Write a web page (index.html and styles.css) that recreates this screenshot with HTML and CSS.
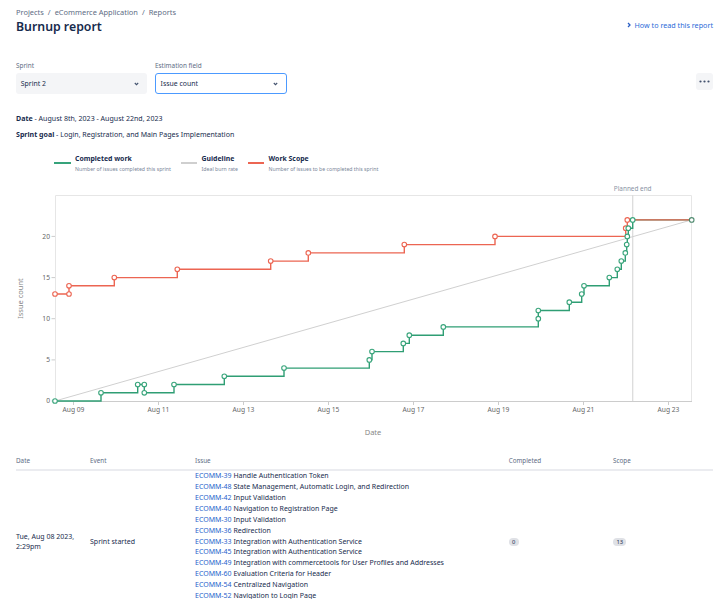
FILE: index.html
```html
<!DOCTYPE html>
<html lang="en">
<head>
<meta charset="utf-8">
<title>Burnup report</title>
<link rel="stylesheet" href="styles.css">
</head>
<body>
<header class="top">
  <div class="titles">
    <nav class="crumbs"><span>Projects</span><span class="sep">/</span><span>eCommerce Application</span><span class="sep">/</span><span>Reports</span></nav>
    <h1 class="title">Burnup report</h1>
  </div>
  <a class="howto"><svg class="howto-icon" width="4" height="6" viewBox="0 0 4 6"><path d="M1 1 L3 3 L1 5" fill="none" stroke="#2a5fc4" stroke-width="1.3"/></svg><span>How to read this report</span></a>
</header>

<section class="filters">
  <div class="field">
    <span class="flabel">Sprint</span>
    <div class="select">Sprint 2<svg class="chev" width="5" height="4" viewBox="0 0 5 4"><path d="M0.8 1 L2.5 2.7 L4.2 1" fill="none" stroke="#42526e" stroke-width="1.1"/></svg></div>
  </div>
  <div class="field">
    <span class="flabel">Estimation field</span>
    <div class="select select-active">Issue count<svg class="chev" width="5" height="4" viewBox="0 0 5 4"><path d="M0.8 1 L2.5 2.7 L4.2 1" fill="none" stroke="#42526e" stroke-width="1.1"/></svg></div>
  </div>
  <button class="more" type="button" aria-label="More"><svg width="11" height="3" viewBox="0 0 11 3"><circle cx="1.5" cy="1.5" r="1.1" fill="#42526e"/><circle cx="5.5" cy="1.5" r="1.1" fill="#42526e"/><circle cx="9.5" cy="1.5" r="1.1" fill="#42526e"/></svg></button>
</section>

<section class="meta">
  <p><b>Date</b> - August 8th, 2023 - August 22nd, 2023</p>
  <p class="goal"><b>Sprint goal</b> - Login, Registration, and Main Pages Implementation</p>
</section>

<div class="legend">
  <div class="litem"><span class="swatch sw-green"></span><div><span class="ltitle">Completed work</span><span class="lsub">Number of issues completed this sprint</span></div></div>
  <div class="litem"><span class="swatch sw-gray"></span><div><span class="ltitle">Guideline</span><span class="lsub">Ideal burn rate</span></div></div>
  <div class="litem"><span class="swatch sw-red"></span><div><span class="ltitle">Work Scope</span><span class="lsub">Number of issues to be completed this sprint</span></div></div>
</div>

<svg class="chart" width="726" height="264" viewBox="0 176 726 264">
  <path class="frame" d="M55.5,400 V194.5 H691.5 V400"/>
  <line class="plannedend" x1="632.7" y1="194" x2="632.7" y2="400"/>
  <text class="pe-label" x="632.7" y="190">Planned end</text>
  <line class="guide" x1="55" y1="400" x2="691.7" y2="218.9"/>
  <line class="axis" x1="55" y1="400.5" x2="692" y2="400.5"/>
  <g class="xticks">
    <line x1="73.5" y1="400" x2="73.5" y2="404"/>
    <line x1="158.5" y1="400" x2="158.5" y2="404"/>
    <line x1="243.5" y1="400" x2="243.5" y2="404"/>
    <line x1="328.5" y1="400" x2="328.5" y2="404"/>
    <line x1="413.5" y1="400" x2="413.5" y2="404"/>
    <line x1="498.5" y1="400" x2="498.5" y2="404"/>
    <line x1="583.5" y1="400" x2="583.5" y2="404"/>
    <line x1="668.5" y1="400" x2="668.5" y2="404"/>
  </g>
  <g class="xlabels">
    <text x="73.5" y="410.5">Aug 09</text>
    <text x="158.5" y="410.5">Aug 11</text>
    <text x="243.5" y="410.5">Aug 13</text>
    <text x="328.5" y="410.5">Aug 15</text>
    <text x="413.5" y="410.5">Aug 17</text>
    <text x="498.5" y="410.5">Aug 19</text>
    <text x="583.5" y="410.5">Aug 21</text>
    <text x="668.5" y="410.5">Aug 23</text>
  </g>
  <g class="yticks">
    <line x1="51.5" y1="400" x2="55" y2="400"/>
    <line x1="51.5" y1="358.9" x2="55" y2="358.9"/>
    <line x1="51.5" y1="317.7" x2="55" y2="317.7"/>
    <line x1="51.5" y1="276.6" x2="55" y2="276.6"/>
    <line x1="51.5" y1="235.4" x2="55" y2="235.4"/>
  </g>
  <g class="ylabels">
    <text x="50" y="402.3">0</text>
    <text x="50" y="361.2">5</text>
    <text x="50" y="320">10</text>
    <text x="50" y="278.9">15</text>
    <text x="50" y="237.7">20</text>
  </g>
  <text class="axis-title" x="373" y="433.5">Date</text>
  <text class="axis-title" transform="translate(23.2 297.5) rotate(-90)" x="0" y="0">Issue count</text>

  <path class="line-green" d="M55,400 H101 V391.8 H137.7 V383.5 H144.3 V391.8 H174 V383.5 H224.3 V375.3 H284 V367.1 H369.3 V358.9 H372 V350.6 H403.3 V342.4 H409.3 V334.2 H443.3 V325.9 H538.3 V309.5 H569.3 V301.2 H581.7 V293 H584 V284.8 H609.3 V276.6 H617.3 V268.3 H621.3 V260.1 H625.3 V251.9 H626.7 V243.6 H627.3 V235.4 H628.3 V227.2 H632.7 V218.9 H691.7"/>
  <path class="line-red" d="M55,293 H69 V284.8 H114.3 V276.6 H177.3 V268.3 H270.7 V260.1 H308.3 V251.9 H404.3 V243.6 H495 V235.4 H625.7 V227.2 H627.3 V218.9 H691.7"/>

  <g class="dots-red">
    <circle cx="55" cy="293" r="2.3"/>
    <circle cx="69" cy="293" r="2.3"/>
    <circle cx="69" cy="284.8" r="2.3"/>
    <circle cx="114.3" cy="276.6" r="2.3"/>
    <circle cx="177.3" cy="268.3" r="2.3"/>
    <circle cx="270.7" cy="260.1" r="2.3"/>
    <circle cx="308.3" cy="251.9" r="2.3"/>
    <circle cx="404.3" cy="243.6" r="2.3"/>
    <circle cx="495" cy="235.4" r="2.3"/>
    <circle cx="625.7" cy="227.2" r="2.3"/>
    <circle cx="627.3" cy="218.9" r="2.3"/>
  </g>
  <g class="dots-green">
    <circle cx="55" cy="400" r="2.3"/>
    <circle cx="101" cy="391.8" r="2.3"/>
    <circle cx="137.7" cy="383.5" r="2.3"/>
    <circle cx="144.3" cy="383.5" r="2.3"/>
    <circle cx="144.3" cy="391.8" r="2.3"/>
    <circle cx="174" cy="383.5" r="2.3"/>
    <circle cx="224.3" cy="375.3" r="2.3"/>
    <circle cx="284" cy="367.1" r="2.3"/>
    <circle cx="369.3" cy="358.9" r="2.3"/>
    <circle cx="372" cy="350.6" r="2.3"/>
    <circle cx="403.3" cy="342.4" r="2.3"/>
    <circle cx="409.3" cy="334.2" r="2.3"/>
    <circle cx="443.3" cy="325.9" r="2.3"/>
    <circle cx="538.3" cy="317.7" r="2.3"/>
    <circle cx="538.3" cy="309.5" r="2.3"/>
    <circle cx="569.3" cy="301.2" r="2.3"/>
    <circle cx="581.7" cy="293" r="2.3"/>
    <circle cx="584" cy="284.8" r="2.3"/>
    <circle cx="609.3" cy="276.6" r="2.3"/>
    <circle cx="617.3" cy="268.3" r="2.3"/>
    <circle cx="621.3" cy="260.1" r="2.3"/>
    <circle cx="625.3" cy="251.9" r="2.3"/>
    <circle cx="626.7" cy="243.6" r="2.3"/>
    <circle cx="627.3" cy="235.4" r="2.3"/>
    <circle cx="628.3" cy="227.2" r="2.3"/>
    <circle cx="632.7" cy="218.9" r="2.3"/>
    <circle class="end-dot" cx="691.7" cy="218.9" r="2.3"/>
  </g>
</svg>

<section class="table">
  <div class="th">Date</div>
  <div class="th">Event</div>
  <div class="th">Issue</div>
  <div class="th">Completed</div>
  <div class="th">Scope</div>

  <div class="td td-date">Tue, Aug 08 2023,<br>2:29pm</div>
  <div class="td">Sprint started</div>
  <div class="td td-issues">
    <div class="issue"><a class="key">ECOMM-39</a> Handle Authentication Token</div>
    <div class="issue"><a class="key">ECOMM-48</a> State Management, Automatic Login, and Redirection</div>
    <div class="issue"><a class="key">ECOMM-42</a> Input Validation</div>
    <div class="issue"><a class="key">ECOMM-40</a> Navigation to Registration Page</div>
    <div class="issue"><a class="key">ECOMM-30</a> Input Validation</div>
    <div class="issue"><a class="key">ECOMM-36</a> Redirection</div>
    <div class="issue"><a class="key">ECOMM-33</a> Integration with Authentication Service</div>
    <div class="issue"><a class="key">ECOMM-45</a> Integration with Authentication Service</div>
    <div class="issue"><a class="key">ECOMM-49</a> Integration with commercetools for User Profiles and Addresses</div>
    <div class="issue"><a class="key">ECOMM-60</a> Evaluation Criteria for Header</div>
    <div class="issue"><a class="key">ECOMM-54</a> Centralized Navigation</div>
    <div class="issue"><a class="key">ECOMM-52</a> Navigation to Login Page</div>
    <div class="issue"><a class="key">ECOMM-51</a> Navigation to Main Page</div>
  </div>
  <div class="td"><span class="badge">0</span></div>
  <div class="td"><span class="badge">13</span></div>
</section>
</body>
</html>
```

FILE: styles.css
```css
html, body {
  overflow: hidden;
}
body {
  margin: 0;
  background: #ffffff;
  color: #172b4d;
  font-family: "Noto Sans", "Open Sans", sans-serif;
}

/* header */
.top {
  display: flex;
  justify-content: space-between;
  align-items: flex-start;
  padding: 6px 13px 0 16px;
}
.crumbs {
  font-size: 7.45px;
  line-height: 12px;
  color: #5e6c84;
}
.crumbs .sep {
  margin: 0 4px;
}
.title {
  margin: 0;
  font-size: 12.3px;
  font-weight: 600;
  line-height: 18px;
  color: #172b4d;
}
.howto {
  display: flex;
  align-items: center;
  gap: 4px;
  margin-top: 13px;
  font-size: 7.2px;
  line-height: 12px;
  color: #2a6ad8;
}
.howto-icon {
  display: block;
}

/* filters */
.filters {
  display: flex;
  align-items: flex-start;
  padding: 25.3px 13px 0 16px;
}
.field {
  display: flex;
  flex-direction: column;
  margin-right: 8px;
}
.flabel {
  font-size: 6.4px;
  line-height: 10px;
  color: #5e6c84;
  margin-bottom: 1.5px;
}
.select {
  box-sizing: border-box;
  width: 131px;
  height: 21.5px;
  display: flex;
  align-items: center;
  justify-content: space-between;
  padding: 0 8.5px 0 4.8px;
  background: #f4f5f7;
  border-radius: 3px;
  font-size: 6.9px;
  color: #172b4d;
}
.select-active {
  width: 131.7px;
  background: #ffffff;
  border: 1.3px solid #4c9aff;
  padding: 0 8px 0 4.6px;
}
.chev {
  display: block;
}
.more {
  margin-left: auto;
  margin-top: 11.5px;
  width: 17.3px;
  height: 17.3px;
  padding: 0;
  border: 0;
  border-radius: 3px;
  background: #f4f5f7;
  display: flex;
  align-items: center;
  justify-content: center;
}

/* meta */
.meta {
  padding: 18px 13px 0 16px;
  font-size: 7.05px;
  line-height: 12px;
}
.meta p {
  margin: 0;
}
.meta .goal {
  margin-top: 4px;
}

/* legend */
.legend {
  display: flex;
  gap: 10px;
  padding: 14px 0 0 54.3px;
}
.litem {
  display: flex;
  gap: 4.3px;
}
.swatch {
  width: 16.4px;
  height: 2px;
  margin-top: 8.2px;
}
.sw-green { background: #36a37b; }
.sw-gray { background: #cfcfcf; }
.sw-red { background: #ec6552; }
.ltitle {
  display: block;
  font-size: 6.9px;
  font-weight: 700;
  line-height: 9px;
  color: #172b4d;
}
.lsub {
  display: block;
  margin-top: 2.7px;
  font-size: 5.2px;
  line-height: 7px;
  color: #7a869a;
}

/* chart */
.chart {
  display: block;
  margin-top: 3.8px;
  font-family: "Noto Sans", "Open Sans", sans-serif;
}
.frame {
  fill: none;
  stroke: #e6e6e6;
  stroke-width: 1;
}
.axis {
  stroke: #cccccc;
  stroke-width: 1;
}
.plannedend {
  stroke: #dcdcdc;
  stroke-width: 1.3;
}
.pe-label {
  font-size: 6.4px;
  fill: #8993a4;
  text-anchor: middle;
}
.guide {
  stroke: #d0d0d0;
  stroke-width: 1;
}
.xticks line, .yticks line {
  stroke: #cccccc;
  stroke-width: 1;
}
.xlabels text {
  font-size: 6.7px;
  fill: #666666;
  text-anchor: middle;
}
.ylabels text {
  font-size: 6.7px;
  fill: #666666;
  text-anchor: end;
}
.axis-title {
  font-size: 7.5px;
  fill: #888888;
  text-anchor: middle;
}
.line-green {
  fill: none;
  stroke: #2f9e74;
  stroke-width: 1.4;
}
.line-red {
  fill: none;
  stroke: #ec6552;
  stroke-width: 1.4;
}
.dots-red circle {
  fill: #ffffff;
  stroke: #ec6552;
  stroke-width: 1.1;
}
.dots-green circle {
  fill: #ffffff;
  stroke: #3aa57c;
  stroke-width: 1.1;
}
.dots-green .end-dot {
  stroke: #4f8a6f;
}

/* table */
.table {
  display: grid;
  grid-template-columns: 74px 105px 313.7px 104.3px 1fr;
  margin: 15.5px 13px 0 16px;
}
.th {
  font-size: 6.3px;
  line-height: 10px;
  color: #5e6c84;
  padding-bottom: 2.3px;
  border-bottom: 2px solid #ebecf0;
}
.td {
  align-self: center;
  font-size: 7px;
  line-height: 10px;
  color: #172b4d;
}
.td-issues {
  padding: 0.9px 0 1px;
  line-height: 10.85px;
}
.key {
  color: #1f5fcc;
}
.badge {
  display: inline-block;
  padding: 0 3.4px;
  border-radius: 6px;
  background: #dfe1e6;
  font-size: 5.8px;
  line-height: 8px;
  color: #172b4d;
}
```
